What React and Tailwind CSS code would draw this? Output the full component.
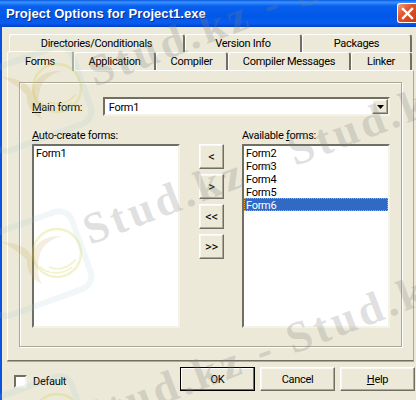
import React from 'react'

const raised = 'bg-[#ece9d8] border border-white border-r-[#716f64] border-b-[#716f64] shadow-[inset_-1px_-1px_0_#aca899,inset_1px_1px_0_#f8f7f0]'
const sunken = 'bg-white border-2 border-t-[#716f64] border-l-[#716f64] border-r-[#f4f3ea] border-b-[#f4f3ea]'

const Tab = ({ label, width, active }) => (
  <div
    className={`flex items-center justify-center rounded-t-[3px] border-t border-l border-r-2 border-t-white border-l-white border-r-[#716f64] bg-[#ece9d8] pt-[2px] ${width} ${
      active ? 'relative z-10 h-[20px] -mt-[1px] -mb-[1px] border-r-[#aca899]' : 'h-[18px]'
    }`}
  >
    {label}
  </div>
)

const ListBox = ({ items, selected }) => (
  <div className={`${sunken} h-[184px] w-[148px]`}>
    {items.map((item) => (
      <div
        key={item}
        className={`h-[13px] pl-[2px] leading-[15px] ${
          item === selected ? 'bg-[#316ac5] text-white outline-1 -outline-offset-1 outline-dotted outline-[#e8a33d]' : ''
        }`}
      >
        {item}
      </div>
    ))}
  </div>
)

const ArrowButton = ({ label }) => (
  <div className={`flex h-[25px] w-[25px] items-center justify-center text-[13px] ${raised}`}>{label}</div>
)

const DialogButton = ({ children, primary }) => (
  <div
    className={`flex h-[24px] w-[75px] items-center justify-center pt-[2px] ${
      primary ? 'bg-[#ece9d8] border border-black shadow-[inset_-1px_-1px_0_#716f64,inset_1px_1px_0_#fff]' : raised
    }`}
  >
    {children}
  </div>
)

// drawn over the whole dialog like the site's stamp on the original picture
const Watermark = () => {
  const logo = (y) => (
    <g key={y} transform={`translate(0 ${y})`}>
      <rect x="-20" y="57" width="104" height="82" rx="14" transform="rotate(-20 34 97)" fill="none" stroke="#9cc4d4" strokeWidth="6" opacity="0.14" />
      <circle cx="57" cy="88" r="24" fill="none" stroke="#cfd24a" strokeWidth="2.5" opacity="0.28" />
      <path d="M72 102c-9 8-24 8-33-1M76 94c-7 9-18 12-27 8" fill="none" stroke="#cfd24a" strokeWidth="1.6" opacity="0.28" />
      <path d="M2 77c14 1 26 5 30 15 2-13 10-21 30-21-12 3-19 9-22 18-3 13-3 22 2 30-11-5-16-14-15-24-6-6-14-12-25-18z" fill="#c9a34a" opacity="0.18" />
    </g>
  )
  const stamp = (x, y) => (
    <text
      key={`${x}-${y}`}
      x={x}
      y={y}
      transform={`rotate(-21 ${x} ${y})`}
      fill="#808080"
      opacity="0.24"
      fontFamily="'Liberation Serif', serif"
      fontWeight="700"
      fontSize="44"
      letterSpacing="4"
    >
      Stud.kz - Stud.kz
    </text>
  )
  return (
    <svg className="pointer-events-none absolute inset-0 z-20" width="416" height="400" viewBox="0 0 416 400">
      {logo(0)}
      {logo(165)}
      {logo(330)}
      {stamp(95, 87)}
      {stamp(90, 245)}
      {stamp(88, 433)}
    </svg>
  )
}

const App = () => {
  return (
    <div className="relative flex h-[400px] w-[416px] flex-col overflow-hidden bg-[#ece9d8] text-[11px] tracking-[-0.3px] text-black font-['Roboto',sans-serif]">
      {/* Title bar */}
      <div className="flex h-[27px] items-center justify-between bg-[linear-gradient(180deg,#0a5ae0_0%,#3a93ff_8%,#0a60ee_22%,#0058e6_60%,#0a5cf0_85%,#0041c8_100%)] pl-[6px]">
        <span className="text-[13px] font-bold tracking-[0.06px] text-white [text-shadow:1px_1px_0_#0a2a8c] font-['Liberation_Sans',sans-serif]">
          Project Options for Project1.exe
        </span>
        <div className="mb-[1px] flex h-[20px] w-[19px] items-center justify-center rounded-l-[3px] border border-r-0 border-white bg-[linear-gradient(135deg,#f0a080_0%,#e2562c_40%,#c93a14_100%)]">
          <svg width="13" height="13" viewBox="0 0 13 13">
            <path d="M2 2l9 9M11 2l-9 9" stroke="#fff" strokeWidth="2.4" strokeLinecap="square" />
          </svg>
        </div>
      </div>

      {/* Body, with the window's blue left edge */}
      <div className="flex flex-1 flex-col border-l-2 border-[#0a52e0]">
        <div className="pl-[5px] pr-[1px] pt-[7px]">
          {/* Tab rows */}
          <div className="flex pl-[2px] pr-[1px]">
            <Tab label="Directories/Conditionals" width="w-[176px]" />
            <Tab label="Version Info" width="w-[117px]" />
            <Tab label="Packages" width="w-[110px]" />
          </div>
          <div className="flex pr-[1px]">
            <Tab label="Forms" width="w-[67px]" active />
            <Tab label="Application" width="w-[82px]" />
            <Tab label="Compiler" width="w-[72px]" />
            <Tab label="Compiler Messages" width="w-[123px]" />
            <Tab label="Linker" width="w-[61px]" />
          </div>

          {/* Tab page */}
          <div className="h-[291px] w-[407px] border border-t-white border-l-white border-r-[#aca899] border-b-[#716f64] p-[11px] shadow-[0_1px_0_#aca899]">
            <div className="flex h-[265px] flex-col border border-[#aca899] pl-[12px] pr-[11px] pt-[14px] shadow-[inset_1px_1px_0_#fff,1px_1px_0_#fff]">
              <div className="flex h-[19px] items-center">
                <span className="w-[71px] pt-[3px]">
                  <span className="underline">M</span>ain form:
                </span>
                <div className={`flex h-[19px] w-[288px] items-center justify-between pl-[4px] ${sunken}`}>
                  <span className="pt-[3px]">Form1</span>
                  <div className={`flex h-[15px] w-[16px] items-center justify-center ${raised}`}>
                    <svg width="7" height="4" viewBox="0 0 7 4">
                      <path d="M0 0h7L3.5 4z" fill="#000" />
                    </svg>
                  </div>
                </div>
              </div>

              <div className="mt-[12px] flex">
                <div>
                  <div className="h-[16px] leading-[15px]">
                    <span className="underline">A</span>uto-create forms:
                  </div>
                  <ListBox items={['Form1']} />
                </div>
                <div className="ml-[19px] flex flex-col gap-[5px] pt-[16px]">
                  <ArrowButton label="<" />
                  <ArrowButton label=">" />
                  <ArrowButton label="<<" />
                  <ArrowButton label=">>" />
                </div>
                <div className="ml-[18px]">
                  <div className="h-[16px] leading-[15px]">
                    Available <span className="underline">f</span>orms:
                  </div>
                  <ListBox items={['Form2', 'Form3', 'Form4', 'Form5', 'Form6']} selected="Form6" />
                </div>
              </div>
            </div>
          </div>
        </div>

        {/* Footer */}
        <div className="flex flex-1 items-start justify-between pl-[12px] pr-[1px] pt-[6px]">
          <div className="mt-[5px] flex items-center gap-[6px]">
            <div className={`h-[13px] w-[13px] ${sunken}`} />
            <span className="pt-[2px]">Default</span>
          </div>
          <div className="flex gap-[5px]">
            <DialogButton primary>OK</DialogButton>
            <DialogButton>Cancel</DialogButton>
            <DialogButton>
              <span>
                <span className="underline">H</span>elp
              </span>
            </DialogButton>
          </div>
        </div>
      </div>

      <Watermark />
    </div>
  )
}

export default App
